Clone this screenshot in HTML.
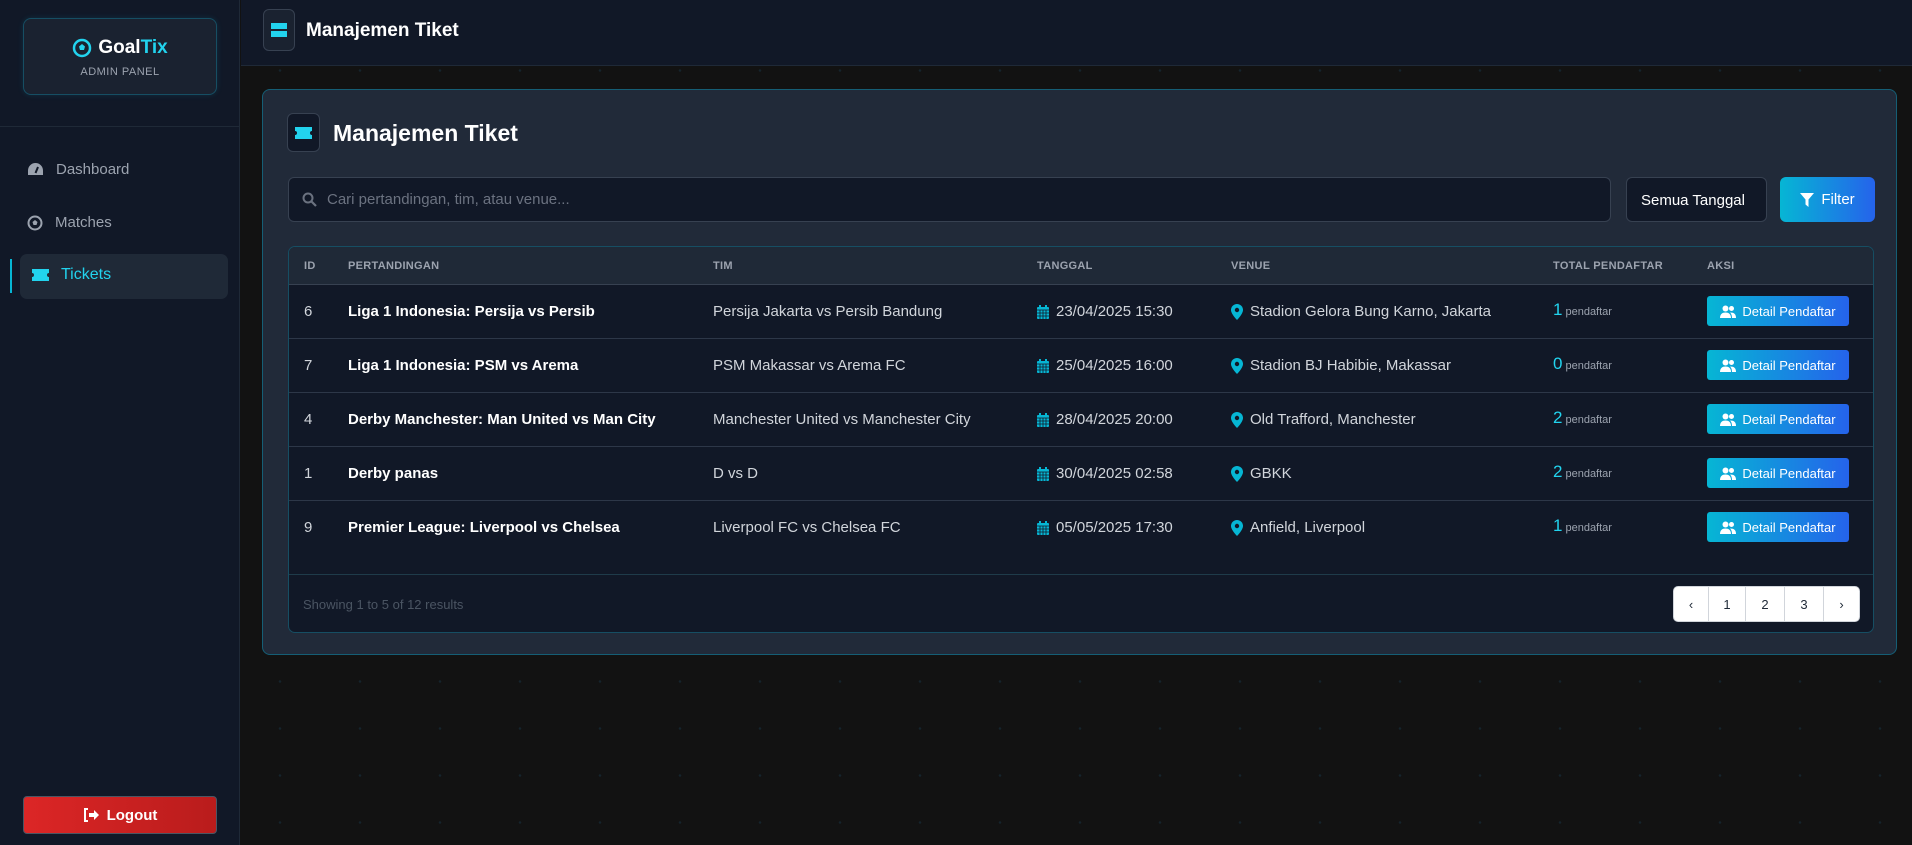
<!DOCTYPE html>
<html><head><meta charset="utf-8"><style>
*{box-sizing:border-box;margin:0;padding:0}
body{width:1912px;height:845px;overflow:hidden;background:#121212;font-family:"Liberation Sans",sans-serif;color:#e5e7eb;position:relative;
background-image:radial-gradient(circle,#15242c 1px,transparent 1.5px);background-size:80px 47px}
.side{position:absolute;left:0;top:0;width:240px;height:845px;background:#111827;border-right:1px solid #1f2937}
.logo{position:absolute;left:23px;top:18px;width:194px;height:77px;border:1px solid #164e63;border-radius:8px;background:#1a2230;text-align:center;box-shadow:0 0 6px rgba(6,182,212,.15)}
.logo .t{margin-top:18px;font-size:19px;font-weight:bold;color:#fff;display:flex;justify-content:center;align-items:center;gap:6px}
.logo .s{font-size:11px;color:#9ca3af;margin-top:7px;letter-spacing:.5px}
.div{position:absolute;left:0;top:126px;width:240px;border-top:1px solid #1f2937}
.nav{position:absolute;left:27px;font-size:15px;color:#9ca3af;display:flex;align-items:center;gap:12px}
.act{position:absolute;left:20px;top:254px;width:208px;height:45px;background:#1f2937;border-radius:7px}
.bar{position:absolute;left:10px;top:259px;width:2px;height:34px;background:#06b6d4}
.logout{position:absolute;left:23px;top:796px;width:194px;height:38px;border-radius:4px;background:linear-gradient(90deg,#dc2626,#b91c1c);border:1px solid #4b5563;color:#fff;font-weight:bold;font-size:15px;display:flex;align-items:center;justify-content:center;gap:8px}
.hdr{position:absolute;left:241px;top:0;right:0;height:66px;background:#111827;border-bottom:1px solid #1f2937}
.ib{position:absolute;border:1px solid #374151;border-radius:6px;background:#1a2230;display:flex;align-items:center;justify-content:center}
.panel{position:absolute;left:262px;top:89px;width:1635px;height:566px;background:#212a39;border:1px solid #155e75;border-radius:8px}
.search{position:absolute;left:25px;top:87px;width:1323px;height:45px;background:#111827;border:1px solid #374151;border-radius:6px;display:flex;align-items:center;padding-left:13px;gap:10px;color:#6b7280;font-size:15px}
.sel{position:absolute;left:1363px;top:87px;width:141px;height:45px;background:#111827;border:1px solid #374151;border-radius:6px;color:#fff;font-size:15px;padding:14px 0 0 14px;overflow:hidden;white-space:nowrap}
.filter{position:absolute;left:1517px;top:87px;width:95px;height:45px;border-radius:6px;background:linear-gradient(90deg,#06b6d4,#2563eb);color:#fff;font-size:15px;display:flex;align-items:center;justify-content:center;gap:7px}
.tbl{position:absolute;left:25px;top:156px;width:1586px;height:387px;background:#111827;border:1px solid #164e63;border-radius:7px;overflow:hidden}
.th{height:38px;background:#1f2937;border-bottom:1px solid #374151;position:relative}
.th span{position:absolute;top:13px;font-size:11px;font-weight:bold;color:#9ca3af;letter-spacing:.3px}
.row{height:54px;border-bottom:1px solid #2d3748;position:relative;font-size:15px;color:#d1d5db}
.row>*{position:absolute;top:18px;white-space:nowrap;display:flex;align-items:center;gap:7px}
.row b{color:#fff}
.row .n{color:#22d3ee;font-size:17px;top:15px;gap:3px;align-items:baseline}
.row .n small{font-size:11px;color:#9ca3af}
.btn{top:11px!important;width:142px;height:30px;border-radius:3px;background:linear-gradient(90deg,#06b6d4,#2563eb);color:#fff;font-size:13px;justify-content:center;gap:6px}
.foot{position:absolute;left:0;top:327px;width:100%;border-top:1px solid #1f3b4a;height:60px}
.pg{position:absolute;left:1384px;top:11px;height:36px;background:#fff;border:1px solid #d1d5db;border-radius:5px;display:flex;overflow:hidden}
.pg div{height:100%;border-right:1px solid #d1d5db;display:flex;align-items:center;justify-content:center;font-size:13px;color:#1f2937}
</style></head><body>
<svg width="0" height="0" style="position:absolute"><defs>
<symbol id="cal" viewBox="0 0 12 14"><rect x="0" y="2" width="12" height="12" rx="1" fill="#06b6d4"/><rect x="2" y="0" width="2" height="3" fill="#06b6d4"/><rect x="8" y="0" width="2" height="3" fill="#06b6d4"/><path d="M0 5h12M0 8h12M0 11h12M3 5v9M6 5v9M9 5v9" stroke="#111827" stroke-width=".8"/></symbol>
<symbol id="pin" viewBox="0 0 12 16"><path d="M6 0A6 6 0 0 0 0 6c0 4 6 10 6 10s6-6 6-10A6 6 0 0 0 6 0z" fill="#06b6d4"/><circle cx="6" cy="6" r="2.2" fill="#111827"/></symbol>
<symbol id="usr" viewBox="0 0 16 13"><circle cx="5.5" cy="3.5" r="3" fill="#fff"/><path d="M0 13c0-4 2.5-5.5 5.5-5.5S11 9 11 13z" fill="#fff"/><circle cx="11.5" cy="3.5" r="2.5" fill="#fff"/><path d="M12 13c0-3-1-4.5-2-5.5 4 0 6 1.5 6 5.5z" fill="#fff"/></symbol>
</defs></svg>
<div class="side">
 <div class="logo"><div class="t"><svg width="20" height="20" viewBox="0 0 20 20"><circle cx="10" cy="10" r="8" fill="none" stroke="#22d3ee" stroke-width="2.5"/><polygon points="10,6 13,8.5 12,12 8,12 7,8.5" fill="#22d3ee"/></svg><span>Goal<span style="color:#22d3ee">Tix</span></span></div><div class="s">ADMIN PANEL</div></div>
 <div class="div"></div>
 <div class="nav" style="top:161px"><svg width="17" height="15" viewBox="0 0 17 15"><path d="M8.5 1A7.5 7.5 0 0 0 1 8.5V13h15V8.5A7.5 7.5 0 0 0 8.5 1z" fill="#9ca3af"/><path d="M8.5 11L11 5" stroke="#111827" stroke-width="2"/></svg>Dashboard</div>
 <div class="nav" style="top:214px"><svg width="16" height="16" viewBox="0 0 16 16"><circle cx="8" cy="8" r="6.5" fill="none" stroke="#9ca3af" stroke-width="2"/><polygon points="8,5 10.5,7 9.5,10 6.5,10 5.5,7" fill="#9ca3af"/></svg>Matches</div>
 <div class="act"></div><div class="bar"></div>
 <div class="nav" style="top:266px;left:32px;color:#22d3ee;font-size:16px"><svg width="17" height="12" viewBox="0 0 17 12"><path d="M0 0h17v4a2 2 0 0 0 0 4v4H0V8a2 2 0 0 0 0-4z" fill="#22d3ee"/></svg>Tickets</div>
 <div class="logout"><svg width="16" height="14" viewBox="0 0 16 14"><path d="M5 1H2v12h3" fill="none" stroke="#fff" stroke-width="2"/><path d="M6 5h5V2l5 5-5 5V9H6z" fill="#fff"/></svg>Logout</div>
</div>
<div class="hdr">
 <div class="ib" style="left:22px;top:9px;width:32px;height:42px"><svg width="16" height="14" viewBox="0 0 16 14"><rect width="16" height="6" fill="#22d3ee"/><rect y="8" width="16" height="6" fill="#22d3ee"/></svg></div>
 <div style="position:absolute;left:65px;top:20px;font-size:19px;font-weight:bold;color:#fff">Manajemen Tiket</div>
</div>
<div class="panel">
 <div class="ib" style="left:24px;top:23px;width:33px;height:39px;background:#111827"><svg width="17" height="12" viewBox="0 0 17 12"><path d="M0 0h17v4a2 2 0 0 0 0 4v4H0V8a2 2 0 0 0 0-4z" fill="#22d3ee"/></svg></div>
 <div style="position:absolute;left:70px;top:30px;font-size:23px;font-weight:bold;color:#fff">Manajemen Tiket</div>
 <div class="search"><svg width="15" height="15" viewBox="0 0 15 15"><circle cx="6" cy="6" r="4.5" fill="none" stroke="#6b7280" stroke-width="2"/><path d="M9.5 9.5L14 14" stroke="#6b7280" stroke-width="2.2"/></svg>Cari pertandingan, tim, atau venue...</div>
 <div class="sel">Semua Tanggal</div>
 <div class="filter"><svg width="14" height="14" viewBox="0 0 14 14"><path d="M0 0h14L8.5 6.5V14L5.5 11.5V6.5z" fill="#fff"/></svg>Filter</div>
 <div class="tbl">
  <div class="th"><span style="left:15px">ID</span><span style="left:59px">PERTANDINGAN</span><span style="left:424px">TIM</span><span style="left:748px">TANGGAL</span><span style="left:942px">VENUE</span><span style="left:1264px">TOTAL PENDAFTAR</span><span style="left:1418px">AKSI</span></div>
  <div class="row"><span style="left:15px">6</span><b style="left:59px">Liga 1 Indonesia: Persija vs Persib</b><span style="left:424px">Persija Jakarta vs Persib Bandung</span><span style="left:748px"><svg width="12" height="14"><use href="#cal"/></svg>23/04/2025 15:30</span><span style="left:942px"><svg width="12" height="16"><use href="#pin"/></svg>Stadion Gelora Bung Karno, Jakarta</span><span class="n" style="left:1264px">1<small>pendaftar</small></span><div class="btn" style="left:1418px"><svg width="16" height="13"><use href="#usr"/></svg>Detail Pendaftar</div></div>
  <div class="row"><span style="left:15px">7</span><b style="left:59px">Liga 1 Indonesia: PSM vs Arema</b><span style="left:424px">PSM Makassar vs Arema FC</span><span style="left:748px"><svg width="12" height="14"><use href="#cal"/></svg>25/04/2025 16:00</span><span style="left:942px"><svg width="12" height="16"><use href="#pin"/></svg>Stadion BJ Habibie, Makassar</span><span class="n" style="left:1264px">0<small>pendaftar</small></span><div class="btn" style="left:1418px"><svg width="16" height="13"><use href="#usr"/></svg>Detail Pendaftar</div></div>
  <div class="row"><span style="left:15px">4</span><b style="left:59px">Derby Manchester: Man United vs Man City</b><span style="left:424px">Manchester United vs Manchester City</span><span style="left:748px"><svg width="12" height="14"><use href="#cal"/></svg>28/04/2025 20:00</span><span style="left:942px"><svg width="12" height="16"><use href="#pin"/></svg>Old Trafford, Manchester</span><span class="n" style="left:1264px">2<small>pendaftar</small></span><div class="btn" style="left:1418px"><svg width="16" height="13"><use href="#usr"/></svg>Detail Pendaftar</div></div>
  <div class="row"><span style="left:15px">1</span><b style="left:59px">Derby panas</b><span style="left:424px">D vs D</span><span style="left:748px"><svg width="12" height="14"><use href="#cal"/></svg>30/04/2025 02:58</span><span style="left:942px"><svg width="12" height="16"><use href="#pin"/></svg>GBKK</span><span class="n" style="left:1264px">2<small>pendaftar</small></span><div class="btn" style="left:1418px"><svg width="16" height="13"><use href="#usr"/></svg>Detail Pendaftar</div></div>
  <div class="row" style="border-bottom:none"><span style="left:15px">9</span><b style="left:59px">Premier League: Liverpool vs Chelsea</b><span style="left:424px">Liverpool FC vs Chelsea FC</span><span style="left:748px"><svg width="12" height="14"><use href="#cal"/></svg>05/05/2025 17:30</span><span style="left:942px"><svg width="12" height="16"><use href="#pin"/></svg>Anfield, Liverpool</span><span class="n" style="left:1264px">1<small>pendaftar</small></span><div class="btn" style="left:1418px"><svg width="16" height="13"><use href="#usr"/></svg>Detail Pendaftar</div></div>
  <div class="foot"><span style="position:absolute;left:14px;top:22px;font-size:13px;color:#4b5563">Showing 1 to 5 of 12 results</span>
   <div class="pg"><div style="width:35px">‹</div><div style="width:37px">1</div><div style="width:39px">2</div><div style="width:39px">3</div><div style="width:35px;border:none">›</div></div></div>
 </div>
</div>
</body></html>
